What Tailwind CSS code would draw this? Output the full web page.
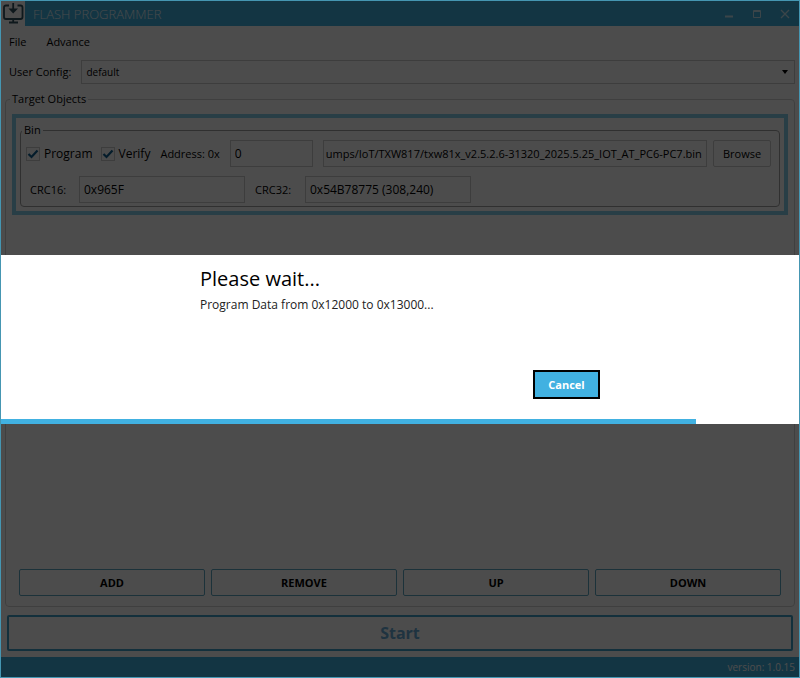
<!DOCTYPE html>
<html lang="en">
<head>
<meta charset="utf-8">
<meta name="viewport" content="width=device-width, initial-scale=1">
<title>Flash Programmer</title>
<script src="https://cdn.jsdelivr.net/npm/@tailwindcss/browser@4"></script>
</head>
<body class="bg-white font-['Open_Sans','Noto_Sans',sans-serif] text-[11px] leading-4 text-black">
<div class="flex h-screen flex-col p-px">
  <header class="flex h-[25px] shrink-0 items-center bg-[#41b1e1] text-white">
    <div class="flex h-[25px] w-6 items-center justify-center bg-white">
      <svg class="h-6 w-6 text-[#305060]" viewBox="0 0 24 24" fill="none" stroke="currentColor" stroke-width="1.800" aria-hidden="true">
        <path d="M8 3.500H5Q3 3.500 3 5.500V15Q3 17 5 17H19.500Q21.500 17 21.500 15V5.500Q21.500 3.500 19.500 3.500H16.500M8 20.500H17M12.200 17V20M12.200 1V9"/>
        <path d="M7.500 6.500L12.200 11.500L17 6.500Z" fill="currentColor" stroke="none"/>
      </svg>
    </div>
    <h1 class="flex-1 pl-2 text-[13px] font-light opacity-90">FLASH PROGRAMMER</h1>
    <div class="flex gap-1 pr-0.5 opacity-70">
      <button class="flex h-6 w-6 items-center justify-center" aria-label="Minimize"><svg class="h-3 w-3" viewBox="0 0 12 12"><path d="M2 8.500H10" stroke="currentColor" stroke-width="2"/></svg></button>
      <button class="flex h-6 w-6 items-center justify-center" aria-label="Maximize"><svg class="h-3 w-3" viewBox="0 0 12 12" fill="none" stroke="currentColor"><path d="M2.500 2.500H9.500V9.500H2.500ZM2 3.500H10"/></svg></button>
      <button class="flex h-6 w-6 items-center justify-center" aria-label="Close"><svg class="h-3 w-3" viewBox="0 0 12 12" fill="none" stroke="currentColor" stroke-width="1.300"><path d="M2 2L10 10M10 2L2 10"/></svg></button>
    </div>
  </header>

  <nav class="flex h-8 shrink-0 items-center gap-5 px-2">
    <button>File</button>
    <button>Advance</button>
  </nav>

  <div class="flex items-center gap-2.5 pt-0.5 pr-1 pl-2">
    <label for="config">User Config:</label>
    <div class="relative flex-1">
      <select id="config" class="block h-6 w-full appearance-none border border-[#ccc] bg-white px-1 text-[10px]"><option>default</option></select>
      <svg class="pointer-events-none absolute top-2 right-1.5 h-2 w-2" viewBox="0 0 8 8" aria-hidden="true"><path d="M1 2H7L4 6Z"/></svg>
    </div>
  </div>

  <fieldset class="mx-1 mt-[7px] flex flex-1 flex-col rounded-sm border border-[#d4d4d4] px-1.5 pb-2.5">
    <legend class="-ml-0.5 px-0.5">Target Objects</legend>
    <div class="mt-[7px] flex-1">
      <section class="border-4 border-[#86cfec] p-1">
        <fieldset class="rounded-sm border border-[#a0a0a0] pr-2 pb-[3px] pl-[5px]">
          <legend class="-ml-1 px-0.5">Bin</legend>
          <div class="mt-0.5 flex items-center">
            <label class="mr-2 flex items-center gap-1 text-[12px]">
              <span class="grid h-3.5 w-3.5 place-items-center"><input type="checkbox" checked class="col-start-1 row-start-1 h-3.5 w-3.5 appearance-none border border-[#ccc]"><svg class="col-start-1 row-start-1 h-3 w-3 text-[#106090]" viewBox="0 0 12 12" fill="none" stroke="currentColor" stroke-width="2.200" aria-hidden="true"><path d="M1.500 6L4.500 9L10.500 2.500"/></svg></span>Program</label>
            <label class="mr-2.5 flex items-center gap-1 text-[12px]">
              <span class="grid h-3.5 w-3.5 place-items-center"><input type="checkbox" checked class="col-start-1 row-start-1 h-3.5 w-3.5 appearance-none border border-[#ccc]"><svg class="col-start-1 row-start-1 h-3 w-3 text-[#106090]" viewBox="0 0 12 12" fill="none" stroke="currentColor" stroke-width="2.200" aria-hidden="true"><path d="M1.500 6L4.500 9L10.500 2.500"/></svg></span>Verify</label>
            <label for="address" class="mr-2.5">Address: 0x</label>
            <input id="address" value="0" class="mr-2.5 h-[27px] w-[83px] border border-[#ccc] px-1 text-[12px]">
            <input aria-label="File path" value="umps/IoT/TXW817/txw81x_v2.5.2.6-31320_2025.5.25_IOT_AT_PC6-PC7.bin" class="mr-1.5 h-[27px] min-w-0 flex-1 border border-[#ccc] px-0.5 text-[11px]">
            <button class="h-[27px] w-[58px] rounded-xs border border-[#ccc]">Browse</button>
          </div>
          <div class="mt-[9px] flex items-center pl-1">
            <label for="crc16" class="w-[49px]">CRC16:</label>
            <input id="crc16" value="0x965F" class="mr-2.5 h-[27px] w-[166px] border border-[#ccc] px-1 text-[12px]">
            <label for="crc32" class="w-[50px]">CRC32:</label>
            <input id="crc32" value="0x54B78775 (308,240)" class="h-[27px] w-[166px] border border-[#ccc] px-1 text-[12px]">
          </div>
        </fieldset>
      </section>
    </div>
    <div class="grid grid-cols-4 gap-1.5 px-[7px] font-bold">
      <button class="h-[27px] rounded-xs border border-[#60a8c4]">ADD</button>
      <button class="h-[27px] rounded-xs border border-[#60a8c4]">REMOVE</button>
      <button class="h-[27px] rounded-xs border border-[#60a8c4]">UP</button>
      <button class="h-[27px] rounded-xs border border-[#60a8c4]">DOWN</button>
    </div>
  </fieldset>

  <button class="mx-1.5 mt-2 mb-1.5 h-9 shrink-0 rounded-xs border-2 border-[#41a1c8] text-[16px] font-bold text-[#68acd8]">Start</button>
  <footer class="flex h-5 shrink-0 items-center justify-end bg-[#41b1e1] px-1 text-[10px] text-white">version: 1.0.15</footer>
</div>

<div class="pointer-events-none fixed inset-0 z-20 border border-[#4596b2]"></div>
<div class="fixed inset-0 z-10 flex items-center bg-black/70">
  <div role="dialog" aria-modal="true" aria-labelledby="wait" class="w-full bg-white">
    <div class="mx-auto w-1/2 pt-2.5 pb-5">
      <h2 id="wait" class="text-[20px] leading-7">Please wait...</h2>
      <p class="mt-1 text-[12px] text-[#222]">Program Data from 0x12000 to 0x13000...</p>
      <div class="mt-[57px] flex justify-end">
        <button class="h-[29px] w-[67px] border-2 border-black bg-[#41b1e1] pt-0.5 text-[11px] font-bold text-white">Cancel</button>
      </div>
    </div>
    <div role="progressbar" aria-valuenow="87" aria-valuemin="0" aria-valuemax="100" class="h-[5px]"><div class="h-full bg-[#41b1e1]" style="width:87%"></div></div>
  </div>
</div>
</body>
</html>
